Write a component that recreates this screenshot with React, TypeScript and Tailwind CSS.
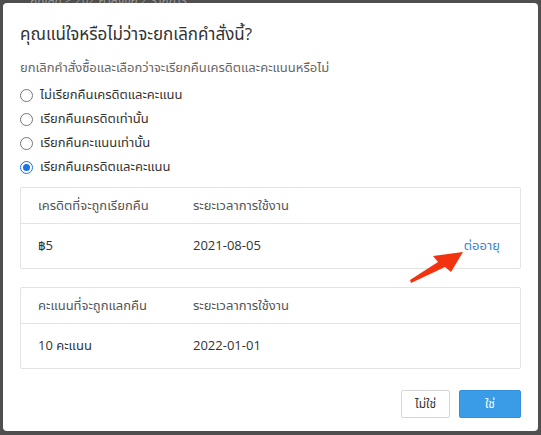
import React from "react";

function Radio({ checked, label }: { checked?: boolean; label: string }) {
  return (
    <label className="flex items-center h-6 gap-[7px]">
      {checked ? (
        <span className="w-[13px] h-[13px] rounded-full border border-[#1a73e8] bg-white flex items-center justify-center">
          <span className="w-[7px] h-[7px] rounded-full bg-[#1a73e8]" />
        </span>
      ) : (
        <span className="w-[13px] h-[13px] rounded-full border border-[#767676] bg-white" />
      )}
      <span className="text-[13px] text-[#333]">{label}</span>
    </label>
  );
}

function Table({
  h1,
  v1,
  date,
  link,
}: {
  h1: string;
  v1: string;
  date: string;
  link?: string;
}) {
  return (
    <div className="border border-[#e3e3e3] rounded-[2px] text-[13px]">
      <div className="flex items-center h-[36px] border-b border-[#e3e3e3] text-[#555]">
        <div className="w-[172px] pl-[17px]">{h1}</div>
        <div>ระยะเวลาการใช้งาน</div>
      </div>
      <div className="flex items-center h-[44px] text-[#333]">
        <div className="w-[172px] pl-[17px]">{v1}</div>
        <div className="flex-1">{date}</div>
        {link && <div className="pr-[20px] text-[#3b86c9]">{link}</div>}
      </div>
    </div>
  );
}

export default function App() {
  return (
    <div
      className="w-[541px] h-[435px] bg-[#4f4f4f] relative overflow-hidden"
      style={{ fontFamily: '"Open Sans", "Noto Sans", "Noto Sans Thai", sans-serif' }}
    >
      <div className="absolute left-[30px] top-[-9px] text-[12px] text-[#999]">
        ยกเลิก &gt; 202 คำสั่งซื้อ 2 รายการ
      </div>
      <div className="absolute left-[3px] top-[3px] w-[535px] h-[428px] bg-white rounded-[4px] flex flex-col px-[17px]">
        <div className="pt-[18px] text-[17px] leading-[26px] text-[#333]">
          คุณแน่ใจหรือไม่ว่าจะยกเลิกคำสั่งนี้?
        </div>
        <div className="mt-[11px] text-[13px] leading-[18px] text-[#666]">
          ยกเลิกคำสั่งซื้อและเลือกว่าจะเรียกคืนเครดิตและคะแนนหรือไม่
        </div>
        <div className="mt-[7px] flex flex-col">
          <Radio label="ไม่เรียกคืนเครดิตและคะแนน" />
          <Radio label="เรียกคืนเครดิตเท่านั้น" />
          <Radio label="เรียกคืนคะแนนเท่านั้น" />
          <Radio checked label="เรียกคืนเครดิตและคะแนน" />
        </div>
        <div className="mt-[8px]">
          <Table h1="เครดิตที่จะถูกเรียกคืน" v1="฿5" date="2021-08-05" link="ต่ออายุ" />
        </div>
        <div className="mt-[18px]">
          <Table h1="คะแนนที่จะถูกแลกคืน" v1="10 คะแนน" date="2022-01-01" />
        </div>
        <div className="mt-[21px] flex justify-end gap-[9px]">
          <button className="h-[28px] px-[13px] border border-[#d5d5d5] rounded-[2px] bg-white text-[12px] text-[#333]">
            ไม่ใช่
          </button>
          <button className="h-[28px] w-[62px] rounded-[2px] bg-[#3a9be6] border border-[#3290dc] text-[12px] text-white">
            ใช่
          </button>
        </div>
      </div>
      <svg className="absolute left-0 top-0" width="541" height="435" viewBox="0 0 541 435">
        <polygon
          points="410,280 438,262 433,256 463,252 451,272 445,267 411,283"
          fill="#f2330f"
        />
      </svg>
    </div>
  );
}
